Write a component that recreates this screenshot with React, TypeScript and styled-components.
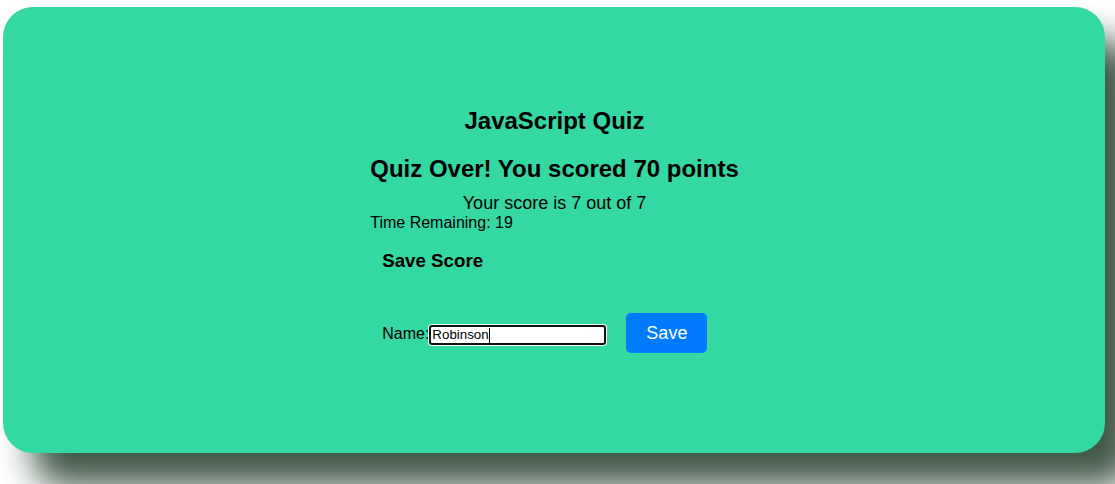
import React from "react";
import styled, { createGlobalStyle } from "styled-components";

const GlobalStyle = createGlobalStyle`
  html, body {
    margin: 0;
    padding: 0;
    background: #ffffff;
    font-family: "Liberation Sans", Arial, sans-serif;
  }
  html, body, #root {
    min-height: 100vh;
  }
`;

const Card = styled.main`
  box-sizing: border-box;
  margin: 7px 0 0 3px;
  width: 1102px;
  height: 446px;
  padding: 100px 0 0 1px;
  background: #34d8a3;
  border-radius: 30px;
  box-shadow: 30px 33px 35px #3f5847;
  display: flex;
  flex-direction: column;
  align-items: center;
  color: #000;
`;

const Content = styled.section`
  display: flex;
  flex-direction: column;
  width: fit-content;
`;

const Heading = styled.h2<{ $gap?: number }>`
  margin: ${(p) => p.$gap ?? 0}px 0 0;
  font-size: 24px;
  font-weight: 700;
  text-align: center;
  line-height: normal;
`;

const ScoreLine = styled.p`
  margin: 10px 0 0;
  font-size: 18px;
  text-align: center;
  line-height: normal;
`;

const TimeLine = styled.p`
  margin: 0;
  font-size: 16px;
  line-height: normal;
`;

const SaveSection = styled.form`
  display: flex;
  flex-direction: column;
  padding-left: 12px;
  margin-top: 18px;
`;

const SubHeading = styled.h3`
  margin: 0;
  font-size: 18.72px;
  font-weight: 700;
  line-height: normal;
`;

const FormRow = styled.div`
  display: flex;
  align-items: baseline;
  margin-top: 41px;
`;

const Label = styled.label`
  font-size: 16px;
  line-height: normal;
`;

const InputWrap = styled.span`
  position: relative;
  display: inline-flex;
`;

const NameInput = styled.input`
  box-sizing: border-box;
  width: 177px;
  height: 20px;
  padding: 0 2px 0 1px;
  border: 2px solid #101010;
  border-radius: 3px;
  box-shadow: 0 0 0 1px #ffffff;
  background: #ffffff;
  font-family: "Liberation Sans", Arial, sans-serif;
  font-size: 13.33px;
  color: #000;
  outline: none;
`;

const Caret = styled.span`
  position: absolute;
  left: 60px;
  top: 3px;
  width: 1px;
  height: 15px;
  background: #000;
`;

const SaveButton = styled.button`
  margin-left: 20px;
  padding: 10px 20px;
  border: none;
  border-radius: 5px;
  background: #007bff;
  color: #ffffff;
  font-family: "Liberation Sans", Arial, sans-serif;
  font-size: 18px;
  line-height: 20px;
  cursor: pointer;
`;

export default function App() {
  return (
    <>
      <GlobalStyle />
      <Card>
        <Content>
          <Heading>JavaScript Quiz</Heading>
          <Heading $gap={20}>Quiz Over! You scored 70 points</Heading>
          <ScoreLine>Your score is 7 out of 7</ScoreLine>
          <TimeLine>Time Remaining: 19</TimeLine>
          <SaveSection onSubmit={(e) => e.preventDefault()}>
            <SubHeading>Save Score</SubHeading>
            <FormRow>
              <Label htmlFor="name">Name:</Label>
              <InputWrap>
                <NameInput id="name" type="text" defaultValue="Robinson" />
                <Caret />
              </InputWrap>
              <SaveButton type="submit">Save</SaveButton>
            </FormRow>
          </SaveSection>
        </Content>
      </Card>
    </>
  );
}
